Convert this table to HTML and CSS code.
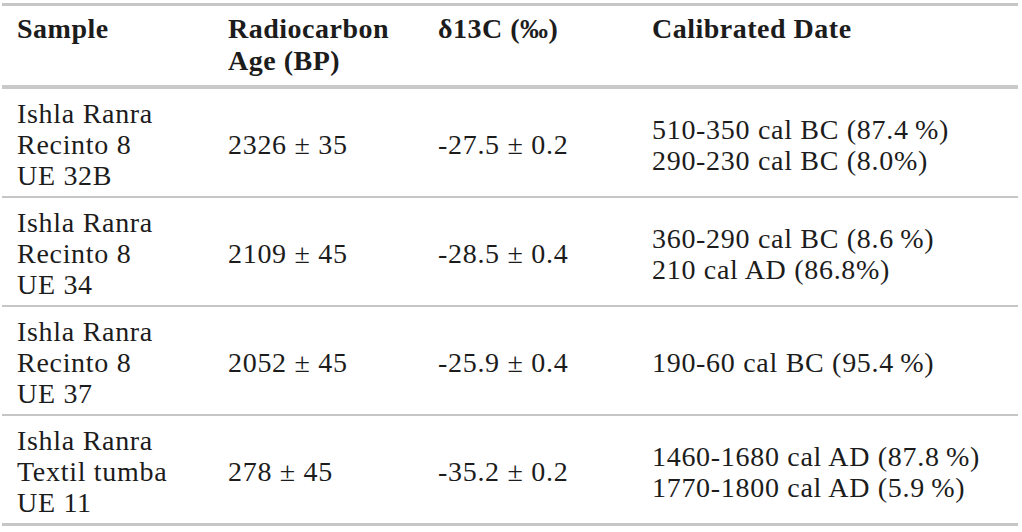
FILE: index.html
```html
<!DOCTYPE html>
<html lang="en">
<head>
    <meta charset="UTF-8">
    <meta name="viewport" content="width=device-width, initial-scale=1.0">
    <title>Radiocarbon dates</title>
    <link rel="stylesheet" href="styles.css">
</head>
<body>
    <table class="dates">
        <thead>
            <tr>
                <th class="col-sample">Sample</th>
                <th class="col-age">Radiocarbon<br>Age (BP)</th>
                <th class="col-delta">δ13C (‰)</th>
                <th>Calibrated Date</th>
            </tr>
        </thead>
        <tbody>
            <tr>
                <td>Ishla Ranra<br>Recinto 8<br>UE 32B</td>
                <td>2326 ± 35</td>
                <td>-27.5 ± 0.2</td>
                <td>510-350 cal BC (87.4&thinsp;%)<br>290-230 cal BC (8.0%)</td>
            </tr>
            <tr>
                <td>Ishla Ranra<br>Recinto 8<br>UE 34</td>
                <td>2109 ± 45</td>
                <td>-28.5 ± 0.4</td>
                <td>360-290 cal BC (8.6&thinsp;%)<br>210 cal AD (86.8%)</td>
            </tr>
            <tr>
                <td>Ishla Ranra<br>Recinto 8<br>UE 37</td>
                <td>2052 ± 45</td>
                <td>-25.9 ± 0.4</td>
                <td>190-60 cal BC (95.4&thinsp;%)</td>
            </tr>
            <tr>
                <td>Ishla Ranra<br>Textil tumba<br>UE 11</td>
                <td>278 ± 45</td>
                <td>-35.2 ± 0.2</td>
                <td>1460-1680 cal AD (87.8&thinsp;%)<br>1770-1800 cal AD (5.9&thinsp;%)</td>
            </tr>
        </tbody>
    </table>
</body>
</html>
```

FILE: styles.css
```css
body {
    margin: 0;
    padding: 3px 0 0 2px;
    background-color: #fff;
    color: #1c1c1c;
    font-family: "Liberation Serif", serif;
}
.dates {
    width: 1016px;
    border-collapse: collapse;
    font-size: 28px;
}
.dates th {
    text-align: left;
    vertical-align: top;
    font-weight: bold;
    letter-spacing: 0.5px;
    line-height: 32px;
    padding: 7px 15px 8px;
    border-top: 3px solid #c6c6c6;
    border-bottom: 4px solid #c9c9c9;
}
.dates td {
    vertical-align: middle;
    letter-spacing: 0.7px;
    line-height: 31px;
    padding: 9px 15px 5px;
    white-space: nowrap;
    border-bottom: 2px solid #c6c6c6;
}
.dates tbody tr:last-child td {
    border-bottom: 3px solid #c6c6c6;
}
.col-sample {
    width: 181px;
}
.col-age {
    width: 180px;
}
.col-delta {
    width: 184px;
}
```
